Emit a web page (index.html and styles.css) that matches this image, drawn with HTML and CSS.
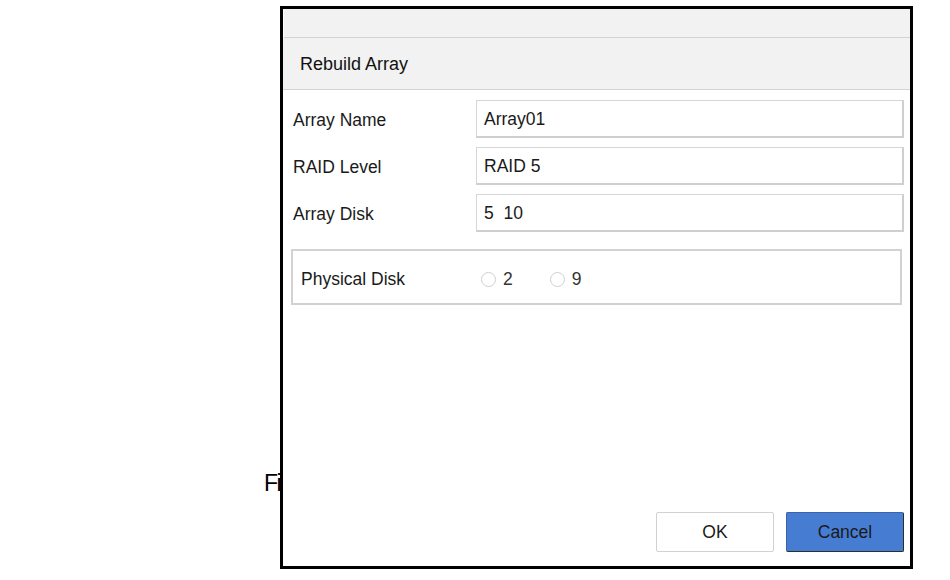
FILE: index.html
```html
<!DOCTYPE html>
<html>
<head>
  <meta charset="UTF-8" />
  <title>Rebuild Array</title>
  <meta name="viewport" content="width=device-width, initial-scale=1" />
  <link rel="stylesheet" href="styles.css">
</head>
<body>
  <div class="page">
    <p class="caption">Figure 1 Rebuild Array</p>
  </div>

  <div class="dialog">
    <div class="dialog-top"></div>
    <div class="dialog-title">Rebuild Array</div>

    <div class="dialog-body">
      <div class="row">
        <label class="row-label">Array Name</label>
        <div class="field">Array01</div>
      </div>
      <div class="row">
        <label class="row-label">RAID Level</label>
        <div class="field">RAID 5</div>
      </div>
      <div class="row">
        <label class="row-label">Array Disk</label>
        <div class="field">5&nbsp;&nbsp;10</div>
      </div>

      <div class="disk-box">
        <span class="disk-label">Physical Disk</span>
        <label class="radio"><span class="circle"></span>2</label>
        <label class="radio"><span class="circle"></span>9</label>
      </div>
    </div>

    <div class="dialog-footer">
      <button class="btn btn-ok">OK</button>
      <button class="btn btn-cancel">Cancel</button>
    </div>
  </div>
</body>
</html>
```

FILE: styles.css
```css
body {
  font-family: "Liberation Sans", Arial, sans-serif;
  margin: 0;
  background-color: #fff;
  color: #1a1a1a;
  width: 950px;
  height: 580px;
  overflow: hidden;
  position: relative;
}
.page {
  padding: 469px 0 0 264px;
}
.caption {
  margin: 0;
  font-size: 23px;
  line-height: 28px;
  letter-spacing: -1.5px;
  color: #000;
}
.dialog {
  position: absolute;
  left: 280px;
  top: 6px;
  width: 633px;
  height: 563px;
  box-sizing: border-box;
  border: 3px solid #000;
  background: #fff;
  display: flex;
  flex-direction: column;
}
.dialog-top {
  height: 28px;
  background: #f2f2f2;
  border-bottom: 1px solid #d2d2d2;
  margin-left: 1px;
}
.dialog-title {
  height: 51px;
  line-height: 53px;
  background: #f2f2f2;
  border-bottom: 1px solid #d2d2d2;
  padding-left: 17px;
  font-size: 18px;
  color: #111;
}
.dialog-body {
  flex: 1;
  padding: 10px 6px 0 10px;
}
.row {
  display: flex;
  align-items: center;
  margin-bottom: 9px;
}
.row-label {
  width: 183px;
  padding-top: 2px;
  font-size: 17.5px;
  color: #1a1a1a;
}
.field {
  flex: 1;
  height: 38px;
  box-sizing: border-box;
  border: 1px solid #d6d6d6;
  border-right: 2px solid #cfcfcf;
  border-bottom: 2px solid #cfcfcf;
  padding: 2px 0 0 7px;
  display: flex;
  align-items: center;
  font-size: 17.5px;
  color: #1a1a1a;
}
.disk-box {
  margin: 17px 2px 0 -2px;
  height: 56px;
  box-sizing: border-box;
  border: 2px solid #d2d2d2;
  display: flex;
  align-items: center;
  padding: 4px 0 0 8px;
}
.disk-label {
  width: 180px;
  font-size: 17.5px;
  color: #1a1a1a;
}
.radio {
  display: flex;
  align-items: center;
  font-size: 17.5px;
  color: #333;
  margin-right: 37px;
}
.circle {
  width: 13px;
  height: 13px;
  border: 1px solid #cfcfcf;
  border-radius: 50%;
  margin-right: 7px;
  background: #fff;
}
.dialog-footer {
  display: flex;
  justify-content: flex-end;
  gap: 12px;
  padding: 0 6px 14px 0;
}
.btn {
  width: 118px;
  height: 40px;
  padding-top: 2px;
  font-family: "Liberation Sans", Arial, sans-serif;
  font-size: 17.5px;
  color: #1a1a1a;
  border-radius: 2px;
  cursor: pointer;
}
.btn-ok {
  background: #fff;
  border: 1px solid #d2d2d2;
}
.btn-cancel {
  background: #477cd3;
  border: 1px solid #3a64a8;
  border-right-color: #2d2d2d;
  border-bottom-color: #2d2d2d;
}
```
